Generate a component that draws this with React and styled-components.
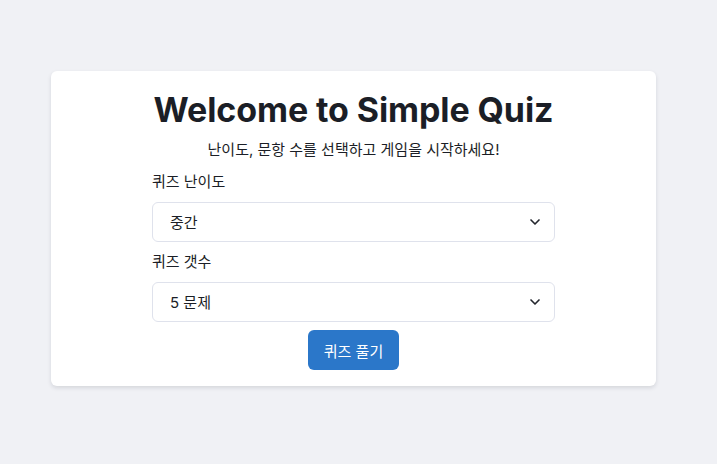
import React, { useState } from "react";
import styled, { createGlobalStyle } from "styled-components";
import { ChevronDown } from "lucide-react";

const GlobalStyle = createGlobalStyle`
  html, body {
    margin: 0;
    padding: 0;
    background: #f0f1f5;
    font-family: Inter, "Noto Sans CJK KR", sans-serif;
    color: #1b1e26;
  }
`;

const Page = styled.div`
  min-height: 464px;
  box-sizing: border-box;
  padding: 71px 61px 0 51px;
`;

const Card = styled.div`
  background: #ffffff;
  border-radius: 6px;
  box-shadow: 0 2px 4px rgba(20, 24, 40, 0.12);
  padding: 19px 0 16px;
`;

const Inner = styled.div`
  width: 403px;
  margin: 0 auto;
  display: flex;
  flex-direction: column;
`;

const Title = styled.h1`
  margin: 0;
  font-size: 34px;
  line-height: 40px;
  font-weight: 700;
  letter-spacing: -0.1px;
  text-align: center;
  color: #1b1e26;
`;

const Subtitle = styled.p`
  margin: 10px 0 12px;
  font-size: 15px;
  line-height: 20px;
  text-align: center;
`;

const Field = styled.div`
  display: flex;
  flex-direction: column;
  margin-bottom: ${(p) => (p.$last ? "8px" : "10px")};
`;

const Label = styled.label`
  font-size: 15px;
  line-height: 20px;
  margin-bottom: 10px;
`;

const SelectWrap = styled.div`
  position: relative;
`;

const Select = styled.select`
  appearance: none;
  width: 100%;
  height: 40px;
  box-sizing: border-box;
  border: 1px solid #dfe2ec;
  border-radius: 6px;
  background: #ffffff;
  padding: 0 40px 0 17px;
  font-family: inherit;
  font-size: 15px;
  color: #1b1e26;
  outline: none;
`;

const Arrow = styled(ChevronDown)`
  position: absolute;
  right: 12px;
  top: 12px;
  pointer-events: none;
  color: #23262d;
`;

const Button = styled.button`
  align-self: center;
  width: 91px;
  height: 40px;
  border: none;
  border-radius: 6px;
  background: #2b77c9;
  color: #ffffff;
  font-family: inherit;
  font-size: 15px;
  cursor: pointer;
`;

export default function App() {
  const [level, setLevel] = useState("medium");
  const [count, setCount] = useState("5");

  return (
    <Page>
      <GlobalStyle />
      <Card>
        <Inner>
          <Title>Welcome to Simple Quiz</Title>
          <Subtitle>난이도, 문항 수를 선택하고 게임을 시작하세요!</Subtitle>
          <Field>
            <Label>퀴즈 난이도</Label>
            <SelectWrap>
              <Select value={level} onChange={(e) => setLevel(e.target.value)}>
                <option value="easy">쉬움</option>
                <option value="medium">중간</option>
                <option value="hard">어려움</option>
              </Select>
              <Arrow size={16} strokeWidth={2.5} />
            </SelectWrap>
          </Field>
          <Field $last>
            <Label>퀴즈 갯수</Label>
            <SelectWrap>
              <Select value={count} onChange={(e) => setCount(e.target.value)}>
                <option value="5">5 문제</option>
                <option value="10">10 문제</option>
                <option value="15">15 문제</option>
              </Select>
              <Arrow size={16} strokeWidth={2.5} />
            </SelectWrap>
          </Field>
          <Button type="button">퀴즈 풀기</Button>
        </Inner>
      </Card>
    </Page>
  );
}
